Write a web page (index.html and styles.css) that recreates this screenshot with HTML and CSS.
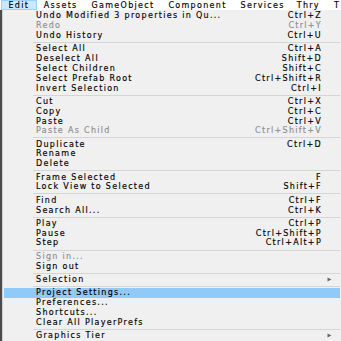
FILE: index.html
```html
<!DOCTYPE html>
<html>
<head>
<meta charset="utf-8">
<link rel="stylesheet" href="styles.css">
</head>
<body>
<div class="menubar">
  <span class="mb-item active">Edit</span>
  <span class="mb-item">Assets</span>
  <span class="mb-item">GameObject</span>
  <span class="mb-item">Component</span>
  <span class="mb-item">Services</span>
  <span class="mb-item thry">Thry</span>
  <span class="mb-item">T</span>
</div>
<div class="area">
  <div class="strip"></div>
  <div class="menu">
    <div class="row"><span class="label">Undo Modified 3 properties in Qu...</span><span class="key">Ctrl+Z</span><span class="arrow"></span></div>
    <div class="row disabled"><span class="label">Redo</span><span class="key">Ctrl+Y</span><span class="arrow"></span></div>
    <div class="row"><span class="label">Undo History</span><span class="key">Ctrl+U</span><span class="arrow"></span></div>
    <div class="sep"></div>
    <div class="row"><span class="label">Select All</span><span class="key">Ctrl+A</span><span class="arrow"></span></div>
    <div class="row"><span class="label">Deselect All</span><span class="key">Shift+D</span><span class="arrow"></span></div>
    <div class="row"><span class="label">Select Children</span><span class="key">Shift+C</span><span class="arrow"></span></div>
    <div class="row"><span class="label">Select Prefab Root</span><span class="key">Ctrl+Shift+R</span><span class="arrow"></span></div>
    <div class="row"><span class="label">Invert Selection</span><span class="key">Ctrl+I</span><span class="arrow"></span></div>
    <div class="sep"></div>
    <div class="row"><span class="label">Cut</span><span class="key">Ctrl+X</span><span class="arrow"></span></div>
    <div class="row"><span class="label">Copy</span><span class="key">Ctrl+C</span><span class="arrow"></span></div>
    <div class="row"><span class="label">Paste</span><span class="key">Ctrl+V</span><span class="arrow"></span></div>
    <div class="row disabled"><span class="label">Paste As Child</span><span class="key">Ctrl+Shift+V</span><span class="arrow"></span></div>
    <div class="sep"></div>
    <div class="row"><span class="label">Duplicate</span><span class="key">Ctrl+D</span><span class="arrow"></span></div>
    <div class="row"><span class="label">Rename</span><span class="key"></span><span class="arrow"></span></div>
    <div class="row"><span class="label">Delete</span><span class="key"></span><span class="arrow"></span></div>
    <div class="sep"></div>
    <div class="row"><span class="label">Frame Selected</span><span class="key">F</span><span class="arrow"></span></div>
    <div class="row"><span class="label">Lock View to Selected</span><span class="key">Shift+F</span><span class="arrow"></span></div>
    <div class="sep"></div>
    <div class="row"><span class="label">Find</span><span class="key">Ctrl+F</span><span class="arrow"></span></div>
    <div class="row"><span class="label">Search All...</span><span class="key">Ctrl+K</span><span class="arrow"></span></div>
    <div class="sep"></div>
    <div class="row"><span class="label">Play</span><span class="key">Ctrl+P</span><span class="arrow"></span></div>
    <div class="row"><span class="label">Pause</span><span class="key">Ctrl+Shift+P</span><span class="arrow"></span></div>
    <div class="row"><span class="label">Step</span><span class="key">Ctrl+Alt+P</span><span class="arrow"></span></div>
    <div class="sep"></div>
    <div class="row disabled"><span class="label">Sign in...</span><span class="key"></span><span class="arrow"></span></div>
    <div class="row"><span class="label">Sign out</span><span class="key"></span><span class="arrow"></span></div>
    <div class="sep"></div>
    <div class="row"><span class="label">Selection</span><span class="key"></span><span class="arrow"><svg width="5" height="5" viewBox="0 0 5 5"><path d="M0.5 0.5 L4.5 2.5 L0.5 4.5 Z" fill="#6a6a6a"/></svg></span></div>
    <div class="sep"></div>
    <div class="row hl"><span class="label">Project Settings...</span><span class="key"></span><span class="arrow"></span></div>
    <div class="row"><span class="label">Preferences...</span><span class="key"></span><span class="arrow"></span></div>
    <div class="row"><span class="label">Shortcuts...</span><span class="key"></span><span class="arrow"></span></div>
    <div class="row"><span class="label">Clear All PlayerPrefs</span><span class="key"></span><span class="arrow"></span></div>
    <div class="sep"></div>
    <div class="row"><span class="label">Graphics Tier</span><span class="key"></span><span class="arrow"><svg width="5" height="5" viewBox="0 0 5 5"><path d="M0.5 0.5 L4.5 2.5 L0.5 4.5 Z" fill="#6a6a6a"/></svg></span></div>
  </div>
</div>
</body>
</html>
```

FILE: styles.css
```css
html, body {
  margin: 0;
  padding: 0;
  background: #f0f0f0;
  width: 341px;
  height: 341px;
  overflow: hidden;
}
body {
  font-family: "DejaVu Sans", sans-serif;
  font-size: 8px;
  letter-spacing: 1.3px;
  color: #000;
  -webkit-text-stroke: 0.15px currentColor;
}
.menubar {
  height: 10px;
  background: #ffffff;
  display: flex;
  align-items: stretch;
  white-space: nowrap;
}
.mb-item {
  padding: 0 6px;
  border: 1px solid transparent;
  height: 8px;
  line-height: 9px;
  font-size: 8px;
  letter-spacing: 1.3px;
}
.mb-item.active {
  margin-left: 1px;
  padding: 0 6.5px;
  background: #cce8ff;
  border-color: #99d1ff;
}
.mb-item.thry {
  margin-left: -2px;
}
.area {
  display: flex;
  height: 331px;
}
.strip {
  width: 2px;
  background: #4b4b4b;
}
.menu {
  flex: 1;
  background: #f0f0f0;
  border-left: 1px solid #cfcfcf;
  padding: 1px 1px 0;
}
.row {
  display: flex;
  align-items: center;
  height: 9.9px;
  line-height: 9.9px;
  padding-left: 32px;
  padding-right: 4px;
  white-space: nowrap;
}
.row .label {
  flex: 1;
}
.row .key {
  text-align: right;
}
.row .arrow {
  width: 14px;
  display: flex;
  align-items: center;
  justify-content: flex-start;
  padding-left: 5px;
  box-sizing: border-box;
}
.row.disabled {
  color: #8e8e8e;
}
.row.hl {
  background: #91c9f7;
}
.sep {
  height: 3.3px;
  margin-left: 29px;
  display: flex;
  align-items: center;
}
.sep::after {
  content: "";
  display: block;
  height: 1px;
  width: 100%;
  background: #d5d5d5;
}
```
